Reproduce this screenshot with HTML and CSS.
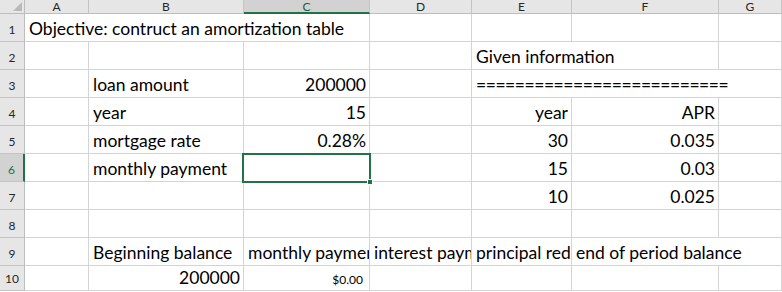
FILE: index.html
```html
<!DOCTYPE html>
<html lang="en">
<head>
  <meta charset="UTF-8">
  <title>Amortization</title>
  <link rel="stylesheet" href="styles.css">
</head>
<body>
  <div class="sheet">
    <div class="corner"><span class="tri"></span></div>
    <div class="colhead">A</div>
    <div class="colhead">B</div>
    <div class="colhead active">C</div>
    <div class="colhead">D</div>
    <div class="colhead">E</div>
    <div class="colhead">F</div>
    <div class="colhead">G</div>

    <!-- row 1 -->
    <div class="rowhead">1</div>
    <div class="cell span3">Objective: contruct an amortization table</div>
    <div class="cell"></div>
    <div class="cell"></div>
    <div class="cell"></div>
    <div class="cell"></div>

    <!-- row 2 -->
    <div class="rowhead">2</div>
    <div class="cell"></div>
    <div class="cell"></div>
    <div class="cell"></div>
    <div class="cell"></div>
    <div class="cell span2">Given information</div>
    <div class="cell"></div>

    <!-- row 3 -->
    <div class="rowhead">3</div>
    <div class="cell"></div>
    <div class="cell">loan amount</div>
    <div class="cell num">200000</div>
    <div class="cell"></div>
    <div class="cell span3 rule">==========================</div>

    <!-- row 4 -->
    <div class="rowhead">4</div>
    <div class="cell"></div>
    <div class="cell">year</div>
    <div class="cell num">15</div>
    <div class="cell"></div>
    <div class="cell num">year</div>
    <div class="cell num">APR</div>
    <div class="cell"></div>

    <!-- row 5 -->
    <div class="rowhead">5</div>
    <div class="cell"></div>
    <div class="cell">mortgage rate</div>
    <div class="cell num">0.28%</div>
    <div class="cell"></div>
    <div class="cell num">30</div>
    <div class="cell num">0.035</div>
    <div class="cell"></div>

    <!-- row 6 -->
    <div class="rowhead active">6</div>
    <div class="cell"></div>
    <div class="cell">monthly payment</div>
    <div class="cell selected"><span class="handle"></span></div>
    <div class="cell"></div>
    <div class="cell num">15</div>
    <div class="cell num">0.03</div>
    <div class="cell"></div>

    <!-- row 7 -->
    <div class="rowhead">7</div>
    <div class="cell"></div>
    <div class="cell"></div>
    <div class="cell"></div>
    <div class="cell"></div>
    <div class="cell num">10</div>
    <div class="cell num">0.025</div>
    <div class="cell"></div>

    <!-- row 8 -->
    <div class="rowhead">8</div>
    <div class="cell"></div>
    <div class="cell"></div>
    <div class="cell"></div>
    <div class="cell"></div>
    <div class="cell"></div>
    <div class="cell"></div>
    <div class="cell"></div>

    <!-- row 9: headers of the table, long ones are clipped by the next cell -->
    <div class="rowhead">9</div>
    <div class="cell"></div>
    <div class="cell">Beginning balance</div>
    <div class="cell clip">monthly payment</div>
    <div class="cell clip">interest payment</div>
    <div class="cell clip">principal reduction</div>
    <div class="cell span2">end of period balance</div>

    <!-- row 10 -->
    <div class="rowhead">10</div>
    <div class="cell"></div>
    <div class="cell num">200000</div>
    <div class="cell num small">$0.00</div>
    <div class="cell"></div>
    <div class="cell"></div>
    <div class="cell"></div>
    <div class="cell"></div>
  </div>
</body>
</html>
```

FILE: styles.css
```css
* {
  margin: 0;
  padding: 0;
  box-sizing: border-box;
}

body {
  background: #fff;
  font-family: Lato, "Liberation Sans", sans-serif;
  overflow: hidden;
}

.sheet {
  display: grid;
  grid-template-columns: 25px 64px 155px 126px 102px 100px 147px 1fr;
  grid-template-rows: 14px repeat(9, 28px) 25px;
  width: 782px;
}

.corner {
  background: #e6e6e6;
  border-right: 1px solid #bdbdbd;
  border-bottom: 1px solid #bdbdbd;
  display: flex;
  justify-content: flex-end;
  align-items: flex-end;
  padding: 0 2px 2px 0;
}

.tri {
  width: 0;
  height: 0;
  border-left: 9px solid transparent;
  border-bottom: 9px solid #b9b9b9;
}

.colhead {
  background: #e6e6e6;
  border-right: 1px solid #c4c4c4;
  border-bottom: 1px solid #bdbdbd;
  font-size: 12px;
  line-height: 13px;
  color: #262626;
  text-align: center;
}

.colhead.active {
  background: #d2d2d2;
  color: #1f5c3a;
  border-bottom: 2px solid #217346;
}

.rowhead {
  background: #e6e6e6;
  border-right: 1px solid #bdbdbd;
  border-bottom: 1px solid #c4c4c4;
  font-size: 12px;
  color: #262626;
  display: flex;
  justify-content: center;
  align-items: flex-end;
  padding-bottom: 4px;
}

.rowhead.active {
  background: #d2d2d2;
  color: #217346;
  border-right: 2px solid #217346;
}

.cell {
  border-right: 1px solid #d4d4d4;
  border-bottom: 1px solid #d4d4d4;
  font-size: 17.5px;
  line-height: 21px;
  color: #000;
  white-space: nowrap;
  display: flex;
  align-items: flex-end;
  padding: 0 3px 2px 4px;
  overflow: hidden;
}

.cell.num {
  justify-content: flex-end;
}

.cell.small {
  font-size: 12px;
  line-height: 15px;
  padding: 0 6px 3px 4px;
}

.cell.rule {
  letter-spacing: -0.45px;
}

.span2 {
  grid-column: span 2;
}

.span3 {
  grid-column: span 3;
}

.cell.clip {
  overflow: hidden;
  padding-right: 0;
}

.cell.selected {
  position: relative;
  overflow: visible;
}

.cell.selected::after {
  content: "";
  position: absolute;
  left: -2px;
  top: -1px;
  right: -2px;
  bottom: -2px;
  border: 2px solid #217346;
}

.handle {
  position: absolute;
  right: -4px;
  bottom: -4px;
  width: 6px;
  height: 6px;
  background: #217346;
  border: 1px solid #fff;
  z-index: 1;
}
```
